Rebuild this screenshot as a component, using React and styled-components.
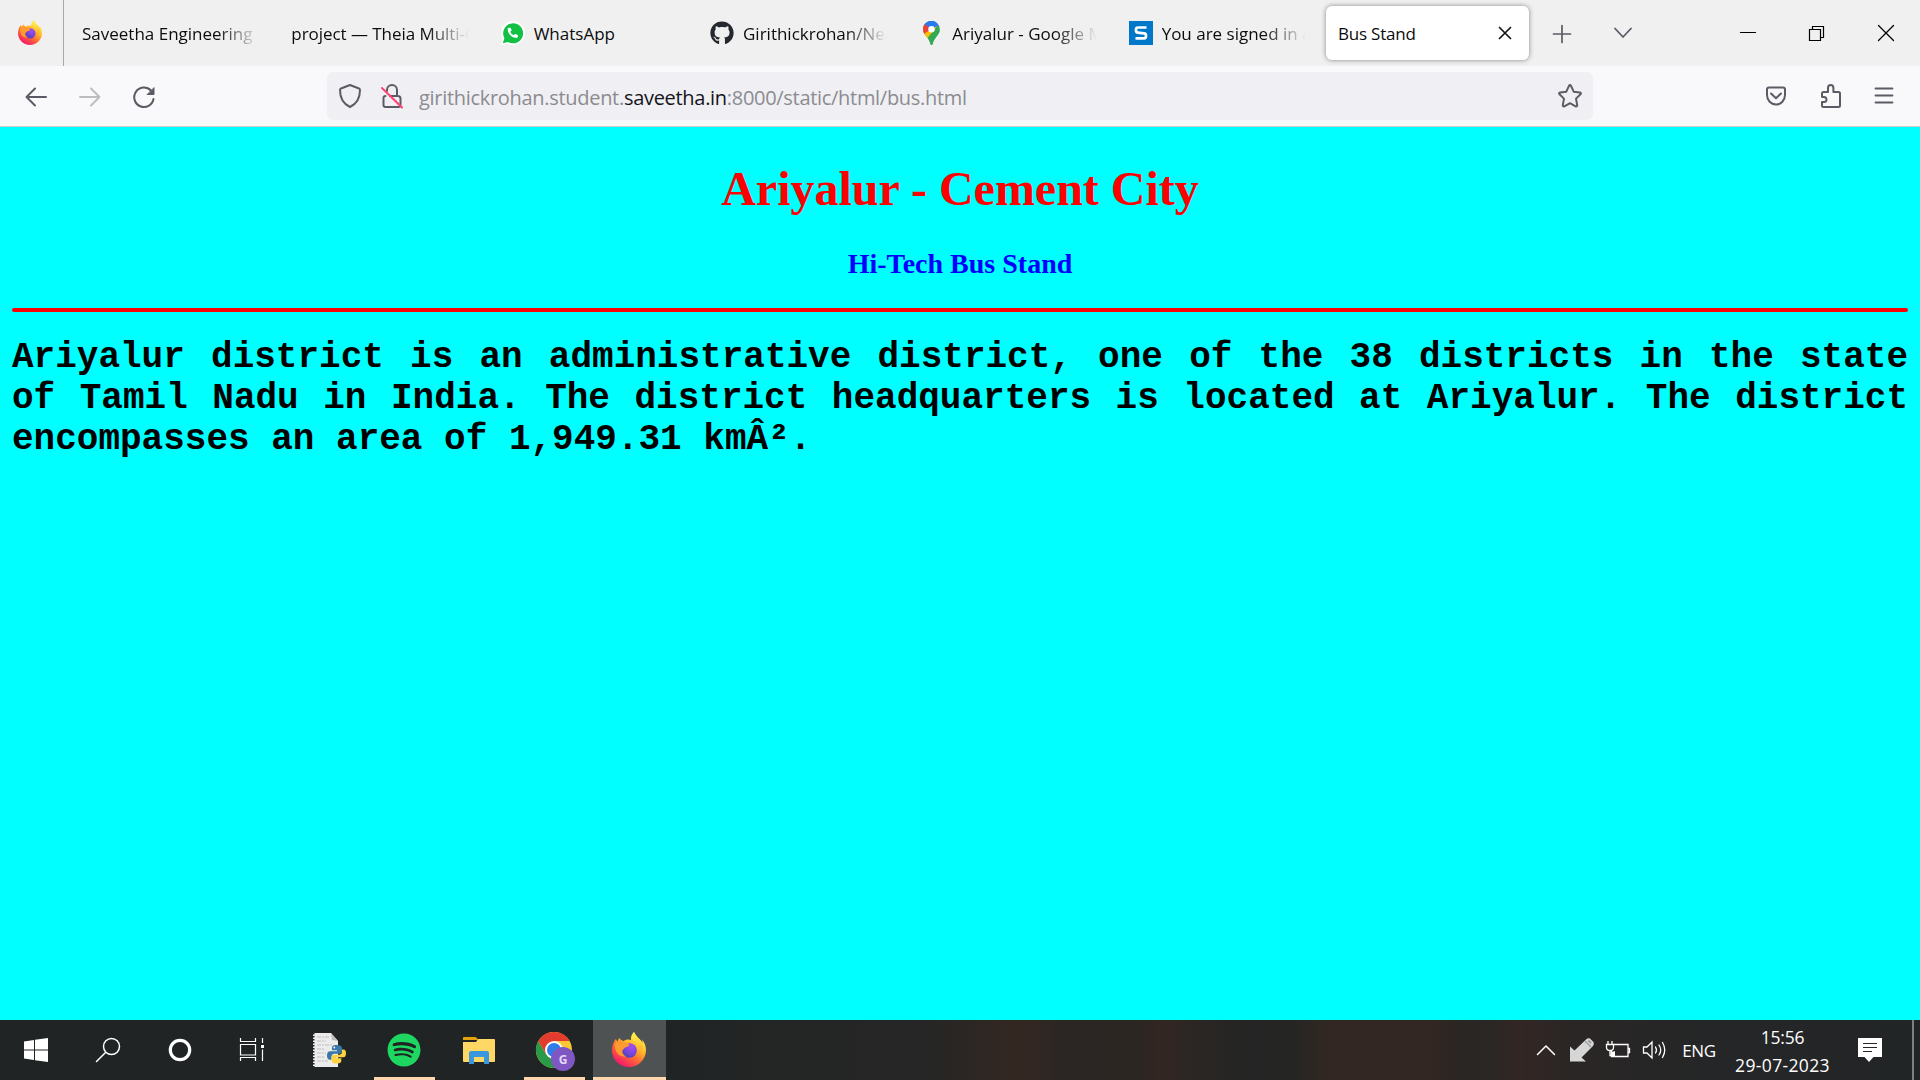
import React from "react";
import styled, { createGlobalStyle, css } from "styled-components";
import { FaGithub, FaPhoneAlt, FaSpotify } from "react-icons/fa";

const GlobalStyle = createGlobalStyle`
  * { box-sizing: border-box; }
  body { margin: 0; background: #00ffff; overflow: hidden; }
`;

const Screen = styled.div`
  display: flex;
  flex-direction: column;
  width: 1920px;
  height: 1080px;
  font-family: "Open Sans", "Noto Sans", sans-serif;
`;

/* ---------- tab strip ---------- */
const TabStrip = styled.div`
  display: flex;
  align-items: center;
  height: 66px;
  flex: none;
  background: #f0f0f0;
`;
const Pinned = styled.div`
  width: 64px;
  height: 66px;
  display: flex;
  align-items: center;
  padding-left: 18px;
  margin-right: 3px;
  border-right: 1px solid #a9a9a9;
`;
const TabCell = styled.div`
  width: 209.33px;
  height: 54px;
  padding: 0 3px;
`;
const TabBody = styled.div`
  display: flex;
  align-items: center;
  gap: 9px;
  height: 54px;
  padding: 0 12px;
  border-radius: 6px;
  ${(p) =>
    p.$active &&
    css`
      background: #ffffff;
      box-shadow: 0 0 5px rgba(0, 0, 0, 0.45);
    `}
`;
const TabLabel = styled.span`
  flex: 1;
  min-width: 0;
  overflow: hidden;
  white-space: nowrap;
  padding-top: 2px;
  font-size: 17px;
  line-height: 28px;
  letter-spacing: ${(p) => p.$track || 0}px;
  color: #0c0c0d;
  ${(p) =>
    p.$fade &&
    css`
      mask-image: linear-gradient(to left, transparent 2px, #000 44px);
    `}
`;
const Cell = styled.div`
  display: flex;
  align-items: center;
  justify-content: center;
  flex: none;
  width: ${(p) => p.$w}px;
  height: ${(p) => p.$h || 48}px;
  margin-left: ${(p) => p.$gap || 0}px;
  color: ${(p) => p.$color || "#5b5b66"};
`;
const WindowButtons = styled.div`
  display: flex;
  margin-left: auto;
`;

/* ---------- navigation bar ---------- */
const NavBar = styled.div`
  display: flex;
  align-items: center;
  height: 61px;
  flex: none;
  padding: 0 9px;
  background: #f9f9fb;
  border-bottom: 1px solid #cccccc;
`;
const UrlBox = styled.div`
  display: flex;
  align-items: center;
  width: 1266px;
  height: 48px;
  margin-left: 156px;
  padding: 0 2px;
  border-radius: 6px;
  background: #f0f0f4;
`;
const UrlText = styled.div`
  flex: 1;
  margin-left: 6px;
  padding-top: 3px;
  font-size: 20px;
  line-height: 30px;
  letter-spacing: -0.3px;
  white-space: nowrap;
  color: #8b8b90;
`;
const Host = styled.span`
  color: #15141a;
`;
const NavActions = styled.div`
  display: flex;
  margin-left: auto;
`;

/* ---------- page ---------- */
const Page = styled.main`
  flex: 1;
  padding: 0 12px;
  background: #00ffff;
`;
const Title = styled.h1`
  margin: 34px 0 0;
  font: bold 48px/55px "Liberation Serif", serif;
  text-align: center;
  color: #ff0000;
`;
const Subtitle = styled.h3`
  margin: 32px 0 0;
  font: bold 28px/32px "Liberation Serif", serif;
  text-align: center;
  color: #0000ff;
`;
const Rule = styled.hr`
  height: 4px;
  margin: 28px 0 0;
  border: 0;
  border-radius: 2px;
  background: #ff0000;
`;
const Story = styled.p`
  margin: 25px 0 0;
  font: bold 36px/41px "Liberation Mono", monospace;
  text-align: justify;
  color: #000000;
`;

/* ---------- taskbar ---------- */
const Taskbar = styled.footer`
  display: flex;
  height: 60px;
  flex: none;
  background: linear-gradient(
    90deg,
    #202425 0,
    #202425 680px,
    #242625 780px,
    #252625 930px,
    #332722 1010px,
    #332722 1030px,
    #2b2623 1060px,
    #2c2623 1140px,
    #322622 1165px,
    #2a2624 1200px,
    #242524 1250px,
    #252524 1290px,
    #322722 1330px,
    #322722 1430px,
    #2a2623 1460px,
    #2b2724 1495px,
    #332625 1520px,
    #2a2625 1570px,
    #252627 1700px,
    #222526 1920px
  );
`;
const Apps = styled.div`
  display: flex;
  margin-left: 4px;
`;
const AppSlot = styled.div`
  width: 75px;
  height: 60px;
  padding: 0 1px;
`;
const AppTile = styled.div`
  display: flex;
  flex-direction: column;
  align-items: center;
  height: 60px;
  background: ${(p) => (p.$focused ? "#4f5253" : "transparent")};
`;
const AppIcon = styled.div`
  display: flex;
  flex: 1;
  align-items: center;
  padding: 3px 2px 0 0;
`;
const Running = styled.div`
  height: 3px;
  width: ${(p) => p.$w}px;
  background: ${(p) => (p.$w ? "#ffd6ae" : "transparent")};
`;
const Tray = styled.div`
  display: flex;
  margin-left: auto;
  color: #ffffff;
`;
const Language = styled.div`
  width: 54px;
  text-align: center;
  font-size: 17px;
  line-height: 61px;
  letter-spacing: -0.3px;
`;
const Clock = styled.div`
  width: 113px;
  padding-top: 3px;
  text-align: center;
  font-size: 17.5px;
  line-height: 28px;
`;
const Time = styled.div`
  letter-spacing: -0.2px;
`;
const Day = styled.div`
  letter-spacing: 0.35px;
`;
const ShowDesktop = styled.div`
  width: 8px;
  height: 60px;
  margin-left: 11px;
  border-left: 2px solid #7d7f80;
`;

/* ---------- drawings ---------- */
const Drawing = styled.svg`
  display: block;
  flex: none;
  overflow: visible;
`;
const Line = ({ w = 24, h = w, sw = 2, children, ...rest }) => (
  <Drawing
    width={w}
    height={h}
    viewBox={`0 0 ${w} ${h}`}
    fill="none"
    stroke="currentColor"
    strokeWidth={sw}
    strokeLinecap="round"
    strokeLinejoin="round"
    {...rest}
  >
    {children}
  </Drawing>
);

const FirefoxLogo = ({ size, id }) => (
  <Drawing width={size} height={size} viewBox="0 0 34 34">
    <defs>
      <linearGradient id={`${id}-body`} x1="0.8" y1="0.1" x2="0.25" y2="0.95">
        <stop offset="0" stopColor="#fff44f" />
        <stop offset="0.35" stopColor="#ffb627" />
        <stop offset="0.62" stopColor="#ff6a35" />
        <stop offset="1" stopColor="#f5156c" />
      </linearGradient>
      <linearGradient id={`${id}-tail`} x1="0.5" y1="0" x2="0.5" y2="1">
        <stop offset="0" stopColor="#fff44f" />
        <stop offset="0.5" stopColor="#ffd23a" />
        <stop offset="1" stopColor="#ff8a2a" stopOpacity="0" />
      </linearGradient>
      <radialGradient id={`${id}-globe`} cx="0.65" cy="0.25" r="0.8">
        <stop offset="0" stopColor="#a64cf0" />
        <stop offset="0.55" stopColor="#7a46dc" />
        <stop offset="1" stopColor="#4a43b8" />
      </radialGradient>
    </defs>
    <path
      d="M22 -1c-2.500 2.500-3.500 5-3 8C16 6 13.500 6.500 11.500 8 9.500 7.500 8.300 6.500 7.600 5 6.500 6 6 7 5.800 8.200 4.500 7.500 4 6.800 4 5.700 1.500 8.500 0 13 0 17.500 0 26.600 7.600 34 17 34s17-7.400 17-17c0-4-1.600-8-4-10.500.4 1.300.6 2.500.5 3.500C28.500 6 24 4 22 -1z"
      fill={`url(#${id}-body)`}
    />
    <circle cx="17.500" cy="17.500" r="7.300" fill={`url(#${id}-globe)`} />
    <path d="M22 -1c-3.500 4-2.500 7.500 2 10.500 3.500 3.500 3 8.700.5 12.500 5.500-2 8-7 6-12C28.500 6 24 4 22 -1z" fill={`url(#${id}-tail)`} />
    <path d="M3 11c3-3 6-3.200 9.500-2 1 1.200 2.500 2 5 2.200-.3 1.800-2 2.600-4.500 3.300-1 1.500-2.500 2-3 4 0 2 1.500 4 4 4.800-5 1-9.500-2-10.500-6.500C3 14.500 2.600 13 3 11z" fill="#ff9a2e" />
  </Drawing>
);

const WhatsAppIcon = () => (
  <Drawing width="24" height="24" viewBox="0 0 24 24">
    <path d="M0 24l1.700-6A12 12 0 1 1 6.200 22.400z" fill="#ffffff" />
    <path d="M1.800 22.200l1.600-5A10 10 0 1 1 7 20.900z" fill="#12c143" />
    <FaPhoneAlt x="6.500" y="6.500" width="10.500" height="10.500" size={10.5} color="#ffffff" />
  </Drawing>
);

const MapsIcon = () => (
  <Drawing width="24" height="24" viewBox="0 0 24 24">
    <defs>
      <clipPath id="pin">
        <path d="M12.500 0A8.300 8.300 0 0 0 4 8.300c0 3 1.500 5 3.500 7.200 2 2.300 3 4 3.600 6.500.3 1.200.6 2 1.400 2s1.100-.8 1.400-2c.6-2.500 1.700-4.200 3.600-6.500C19.400 13.300 20.800 11.300 20.800 8.300A8.300 8.300 0 0 0 12.500 0z" />
      </clipPath>
    </defs>
    <g clipPath="url(#pin)">
      <path d="M0 0h24v24H0z" fill="#34a853" />
      <path d="M12.500 8.300L22 -3H3v8z" fill="#1a73e8" />
      <path d="M15 0L22 0V8L18.500 4.500 9.500 15 7 11z" fill="#4285f4" />
      <path d="M3 1.500L6.500 3l5 4.500L4.500 16 2 12z" fill="#ea4335" />
      <path d="M12.500 8.300L4.500 13l4 6 10.200-14.400z" fill="#fbbc04" />
      <path d="M19 4.200L8.500 17l4 8 9-12z" fill="#34a853" />
      <path d="M6 3.200L12.500 8.300 19 4.200C17 1 14.800 0 12.500 0S7.600 1.200 6 3.200z" fill="#2b79f0" />
    </g>
    <circle cx="12.500" cy="8.300" r="3.200" fill="#ffffff" />
  </Drawing>
);

const SBadge = () => (
  <Drawing width="24" height="24" viewBox="0 0 24 24">
    <path d="M0 0h24v24H0z" fill="#0078ca" />
    <path d="M17.500 6.500H9q-2 0-2 2v1q0 2 2 2.200l6 .6q2 .2 2 2.200v.8q0 2-2 2H6.500" fill="none" stroke="#ffffff" strokeWidth="2.700" />
  </Drawing>
);

const PythonNotebook = () => (
  <Drawing width="34" height="36" viewBox="0 0 34 36">
    <path d="M1 1h18l7 8v26H1z" fill="#ececec" />
    <path d="M19 1l7 8-6-1z" fill="#bdbdbd" />
    <path d="M1.500 1v34" stroke="#222222" strokeWidth="2" strokeDasharray="1.500 1.500" />
    <path d="M5 5h12M5 9h9M5 13h15M5 17h8M5 21h9M5 25h8M5 29h11" stroke="#bcbcbc" strokeWidth="1.200" strokeDasharray="4 1 2 1" />
    <path d="M24.500 13c-4 0-4.500 1.500-4.500 3v2.300h5v1h-7c-2 0-3 1.700-3 4.200s1 4.200 2.700 4.200H19.500V25c0-2 1.300-3.200 3-3.200h5c1.500 0 2.500-1.200 2.500-2.700V16c0-2-1.800-3-5.500-3z" fill="#3a76a8" />
    <path d="M24.500 31.500c4 0 4.800-1.300 4.800-3v-2.200h-5v-1h7c2 0 2.700-1.500 2.700-4 0-2.300-.8-3.800-2.500-3.800H30v2.200c0 2-1.300 3-3 3h-5c-1.500 0-2.500 1.200-2.500 2.700v3c0 2 1.800 3.100 5 3.100z" fill="#ffd242" />
    <circle cx="22.300" cy="15.500" r="0.900" fill="#ffffff" />
  </Drawing>
);

const FolderIcon = () => (
  <Drawing width="32" height="27" viewBox="0 0 32 27">
    <path d="M0 1q0-1 1-1h11q1 0 2 1l1 2H0z" fill="#e2a30b" />
    <path d="M0 5h13l2-3h16q1 0 1 1v21q0 1-1 1H1q-1 0-1-1z" fill="#ffd765" />
    <path d="M6 27V16q0-2 2-2h16q2 0 2 2v11h-5v-7H11v7z" fill="#3b97dd" />
  </Drawing>
);

const BadgeLetter = styled.text`
  font: bold 12px "Open Sans", sans-serif;
  fill: #e2d8f3;
  text-anchor: middle;
`;

const ChromeIcon = () => (
  <Drawing width="36" height="36" viewBox="0 0 36 36">
    <circle cx="18" cy="18" r="18" fill="#fcc934" />
    <path d="M2.400 9A18 18 0 0 0 18 36l7.800-13.500L18 18l-7.800 4.500z" fill="#2a9a48" />
    <path d="M2.400 9A18 18 0 0 1 33.600 9H18L10.200 22.500z" fill="#e33b2e" />
    <circle cx="18" cy="18" r="9" fill="#ffffff" />
    <circle cx="18" cy="18" r="7" fill="#2f7de9" />
    <circle cx="27" cy="27" r="12" fill="#7e57c2" />
    <BadgeLetter x="27" y="31.500">G</BadgeLetter>
  </Drawing>
);

const UsbArrow = () => (
  <Drawing width="24" height="24" viewBox="0 0 24 24">
    <path d="M0 8.500l4.500 4L16 1.500Q18-.5 20 .5L23.500 4q1 2-.5 4L11.500 19.500l4.500 4H0z" fill="#d6d6d6" />
    <path d="M15 3l6 6" stroke="#9a9a9a" strokeWidth="1.200" />
    <path d="M18.500 2.500l2.500 2.500" stroke="#8a8a8a" strokeWidth="1.500" />
  </Drawing>
);

const tabs = [
  { label: "Saveetha Engineering C", fade: true, track: 0 },
  { label: "project — Theia Multi-C", fade: true, track: -0.05 },
  { label: "WhatsApp", icon: <WhatsAppIcon />, track: 0 },
  { label: "Girithickrohan/Near", icon: <FaGithub size={24} color="#24292f" />, fade: true, track: 0 },
  { label: "Ariyalur - Google Maps", icon: <MapsIcon />, fade: true, track: 0 },
  { label: "You are signed in as", icon: <SBadge />, fade: true, track: 0 },
];

const apps = [
  { name: "notebook", icon: <PythonNotebook />, bar: 0 },
  { name: "spotify", icon: <FaSpotify size={34} color="#1ed760" />, bar: 61 },
  { name: "files", icon: <FolderIcon />, bar: 0 },
  { name: "chrome", icon: <ChromeIcon />, bar: 61 },
  { name: "firefox", icon: <FirefoxLogo size={34} id="task" />, bar: 73, focused: true },
];

export default function App() {
  return (
    <Screen>
      <GlobalStyle />
      <TabStrip>
        <Pinned>
          <FirefoxLogo size={24} id="pinned" />
        </Pinned>
        {tabs.map((t) => (
          <TabCell key={t.label}>
            <TabBody>
              {t.icon}
              <TabLabel $fade={t.fade} $track={t.track}>{t.label}</TabLabel>
            </TabBody>
          </TabCell>
        ))}
        <TabCell>
          <TabBody $active>
            <TabLabel $track={-0.2}>Bus Stand</TabLabel>
            <Cell $w={24} $h={24} $color="#15141a">
              <Line w={12} sw={1.7}><path d="M0.500 0.500l11 11M11.500 0.500l-11 11" /></Line>
            </Cell>
          </TabBody>
        </TabCell>
        <Cell $w={54} $gap={3}>
          <Line w={18} sw={1.7}><path d="M9 1.500v17M.5 10h17" /></Line>
        </Cell>
        <Cell $w={54} $gap={7}>
          <Line w={18} h={10} sw={1.8}><path d="M1 .5l8 8.500 8-8.500" /></Line>
        </Cell>
        <WindowButtons>
          <Cell $w={69} $color="#000">
            <Line w={15} h={2} sw={1.2}><path d="M.5 .5h15" /></Line>
          </Cell>
          <Cell $w={69} $color="#000">
            <Line w={15} sw={1.2} strokeLinejoin="miter"><path d="M.5 3.500h11v11H.5zM3.500 3V.5h11v11H12" /></Line>
          </Cell>
          <Cell $w={69} $color="#000">
            <Line w={16} sw={1.3}><path d="M.5 .5l15 15M15.500 .5l-15 15" /></Line>
          </Cell>
        </WindowButtons>
      </TabStrip>

      <NavBar>
        <Cell $w={54}>
          <Line w={22} h={18}><path d="M21 10H1.500M10 1.500L1.500 10 10 18.500" /></Line>
        </Cell>
        <Cell $w={54} $color="#bcbcc1">
          <Line w={22} h={18}><path d="M1 10h19.500M12 1.500l8.500 8.500L12 18.500" /></Line>
        </Cell>
        <Cell $w={54}>
          <Line w={22} h={20}>
            <path d="M20.500 13a9.700 9.700 0 1 1-2.600-8.500" />
            <path d="M21 2v6.500h-6.500z" fill="currentColor" strokeWidth="1" />
          </Line>
        </Cell>
        <UrlBox>
          <Cell $w={42}>
            <Line w={22} h={24}><path d="M11 1l9 3.500q1 .4 1 1.500c0 8-2.500 13.500-10 17C3.500 19.500 1 14 1 6q0-1.100 1-1.500z" /></Line>
          </Cell>
          <Cell $w={42}>
            <Line w={22} h={24}>
              <path d="M6 7V6a5 5 0 0 1 10 0v6M9 12h8q2.500 0 2.500 2.500V21q0 2-2 2h-13q-2 0-2-2v-7q0-2 2-2" />
              <path d="M1 4l20 19.500" stroke="#ff4070" />
            </Line>
          </Cell>
          <UrlText>
            girithickrohan.student.<Host>saveetha.in</Host>:8000/static/html/bus.html
          </UrlText>
          <Cell $w={42}>
            <Line w={24}>
              <path d="M11 1.800q1-1.800 2 0l2.700 5.900 6.200.8q1.700.4.600 1.800l-4.500 4.300 1.200 6.500q.1 1.800-1.600 1.200L12 19.200l-5.600 3.100q-1.700.6-1.600-1.200L6 14.600 1.500 10.300Q.400 8.900 2.100 8.500l6.200-.8z" />
            </Line>
          </Cell>
        </UrlBox>
        <NavActions>
          <Cell $w={54}>
            <Line w={21} h={20}>
              <path d="M3 1.500h14q2 0 2 2v5.500a9 9.500 0 0 1-18 0V3.500q0-2 2-2zM5 7.500l5 4.800 5-4.800" />
            </Line>
          </Cell>
          <Cell $w={54}>
            <Line w={20} h={24}>
              <path d="M2 13V9.500Q2 8 3.500 8H8V4a2.700 3 0 0 1 5.400 0v4H18.500Q20 8 20 9.500v12q0 1.500-1.500 1.500h-15Q2 23 2 21.500V18h2a2.500 2.500 0 0 0 0-5z" />
            </Line>
          </Cell>
          <Cell $w={54}>
            <Line w={18} h={16} sw={1.8}><path d="M.5 .5h17M.5 7.500h17M.5 14.500h17" /></Line>
          </Cell>
        </NavActions>
      </NavBar>

      <Page>
        <Title>Ariyalur - Cement City</Title>
        <Subtitle>Hi-Tech Bus Stand</Subtitle>
        <Rule />
        <Story>
          Ariyalur district is an administrative district, one of the 38 districts in the state of Tamil Nadu in India. The
          district headquarters is located at Ariyalur. The district encompasses an area of 1,949.31 kmÂ².
        </Story>
      </Page>

      <Taskbar>
        <Cell $w={72} $h={60}>
          <Drawing width="24" height="24" viewBox="0 0 24 24">
            <path d="M0 3.400L10 2v9.500H0zM11 1.800L24 0v11.500H11zM0 12.500h10V22L0 20.600zM11 12.500h13V24l-13-1.800z" fill="#ffffff" />
          </Drawing>
        </Cell>
        <Cell $w={72} $h={60} $color="#fff">
          <Line w={24} sw={1.5}><circle cx="15.500" cy="8.500" r="8" /><path d="M9.500 14.500L.5 23.500" /></Line>
        </Cell>
        <Cell $w={72} $h={60} $color="#fff">
          <Line w={24} sw={3.2}><circle cx="12" cy="12" r="9.700" /></Line>
        </Cell>
        <Cell $w={72} $h={60} $color="#fff">
          <Line w={24} sw={1.2} strokeLinecap="butt" strokeLinejoin="miter">
            <path d="M.5 0v3.500h15V0M.5 6.500h15v10.500H.5zM.5 23v-3.500h15V23M22.500 0v5M22.500 11.500V23" />
            <path d="M21 7h3v3h-3z" fill="#ffffff" stroke="none" />
          </Line>
        </Cell>
        <Apps>
          {apps.map((a) => (
            <AppSlot key={a.name}>
              <AppTile $focused={a.focused}>
                <AppIcon>{a.icon}</AppIcon>
                <Running $w={a.bar} />
              </AppTile>
            </AppSlot>
          ))}
        </Apps>
        <Tray>
          <Cell $w={36} $h={60} $color="#fff">
            <Line w={18} h={10} sw={1.5}><path d="M.5 9.500L9 1l8.500 8.500" /></Line>
          </Cell>
          <Cell $w={36} $h={60}><UsbArrow /></Cell>
          <Cell $w={36} $h={60} $color="#fff">
            <Line w={24} h={18} sw={1.3} strokeLinecap="butt" strokeLinejoin="miter">
              <path d="M8 3.500h14v12H5.500V10M22.500 7.500h1v4h-1M2 0v3.500M6 0v3.500M.5 3.500h7v3q0 3-3.500 3t-3.500-3zM4 9.500v5H6" />
              <path d="M6 15V11l3-1v5z" fill="#ffffff" stroke="none" />
            </Line>
          </Cell>
          <Cell $w={36} $h={60} $color="#fff">
            <Line w={23} h={18} sw={1.3} strokeLinejoin="miter">
              <path d="M.5 6h3.500l5-5v16l-5-5H.500zM12.500 6q2 3 0 6M16 4q3.500 5 0 10M19.500 1.500q4.500 7.500 0 15" />
            </Line>
          </Cell>
          <Language>ENG</Language>
          <Clock>
            <Time>15:56</Time>
            <Day>29-07-2023</Day>
          </Clock>
          <Cell $w={62} $h={60}>
            <Drawing width="24" height="24" viewBox="0 0 24 24">
              <path d="M0 0h24v19H15.500L11 24 6.500 19H0z" fill="#ffffff" />
              <path d="M5 5.500h14M5 9.500h14M5 13.500h9" stroke="#242627" strokeWidth="1.200" />
            </Drawing>
          </Cell>
          <ShowDesktop />
        </Tray>
      </Taskbar>
    </Screen>
  );
}
